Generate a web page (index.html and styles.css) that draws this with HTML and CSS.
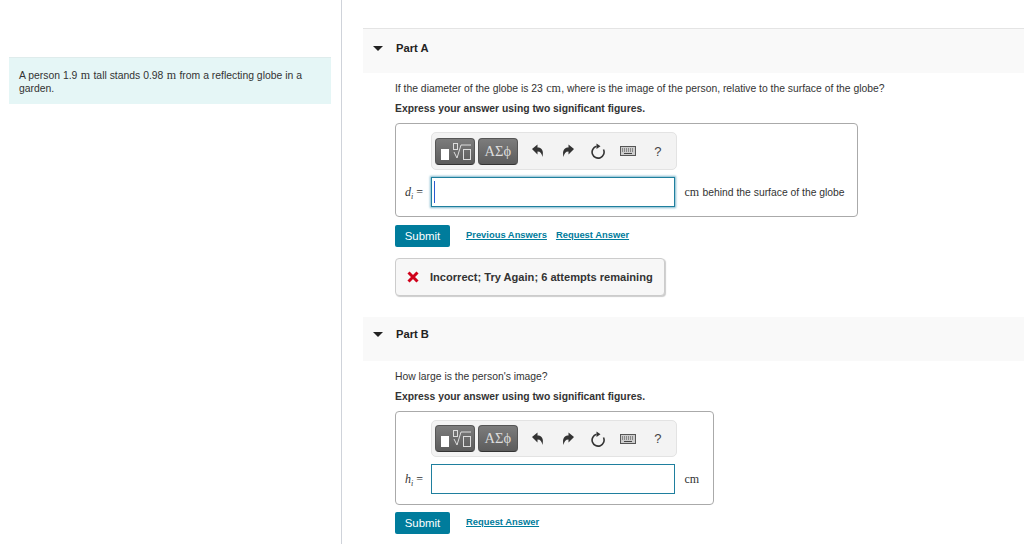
FILE: index.html
```html
<!DOCTYPE html>
<html lang="en">
<head>
<meta charset="UTF-8">
<title>Part A</title>
<link rel="stylesheet" href="styles.css">
</head>
<body>
<div class="page">
  <aside class="side">
    <div class="intro">A person 1.9 <span class="unit">m</span> tall stands 0.98 <span class="unit">m</span> from a reflecting globe in a garden.</div>
  </aside>
  <main class="main">
    <section class="part part-a">
      <div class="part-head"><span class="caret"></span><span class="part-title">Part A</span></div>
      <div class="part-body">
        <p class="question">If the diameter of the globe is 23 <span class="unit">cm</span>, where is the image of the person, relative to the surface of the globe?</p>
        <p class="hint">Express your answer using two significant figures.</p>
        <div class="answer answer-a">
          <div class="toolbar">
            <button class="tool tool-math">
              <svg width="38" height="25" viewBox="0 0 38 25"><rect x="5" y="10" width="8" height="11" fill="#fff"/><rect x="17.500" y="4.500" width="4" height="6" fill="none" stroke="#ddd"/><path d="M18 13l3 6 4-13h10" fill="none" stroke="#ddd"/><rect x="27.500" y="10.500" width="7" height="10" fill="none" stroke="#ddd"/></svg>
            </button>
            <button class="tool tool-greek">ΑΣϕ</button>
            <span class="tool-icon"><svg width="14" height="14" viewBox="0 0 14 14"><path d="M1 5L6.500 .5v3c4 0 6.500 2.500 5 9.500C10.800 9.500 9.500 7.500 6.500 7.500v3z" fill="#333"/></svg></span>
            <span class="tool-icon"><svg width="14" height="14" viewBox="0 0 14 14"><path d="M13 5L7.500 .5v3c-4 0-6.500 2.500-5 9.500C3.200 9.500 4.500 7.500 7.500 7.500v3z" fill="#333"/></svg></span>
            <span class="tool-icon"><svg width="16" height="16" viewBox="0 0 16 16"><path d="M6.500 3.300A6 6 0 1 0 13.500 6.500" fill="none" stroke="#333" stroke-width="1.600"/><path d="M6.500 .5l4 2.800-4 2.700z" fill="#333"/></svg></span>
            <span class="tool-icon"><svg width="16" height="10" viewBox="0 0 16 10"><rect x=".5" y=".5" width="15" height="9" fill="#ccc" stroke="#555"/><path d="M2 3h12M2 5h12" stroke="#444" stroke-dasharray="1 1"/><path d="M4 7.500h8" stroke="#444"/></svg></span>
            <span class="tool-icon tool-help">?</span>
          </div>
          <div class="answer-row">
            <span class="var"><i>d</i><sub><i>i</i></sub> =</span>
            <div class="field field-on"><span class="cursor"></span></div>
            <span class="after"><span class="unit">cm</span> behind the surface of the globe</span>
          </div>
        </div>
        <div class="actions">
          <button class="submit">Submit</button>
          <a class="link" href="#">Previous Answers</a>
          <a class="link" href="#">Request Answer</a>
        </div>
        <div class="feedback">
          <svg width="12" height="12" viewBox="0 0 12 12"><path d="M1.500 1.500l9 9M10.500 1.500l-9 9" stroke="#d0021b" stroke-width="3"/></svg>
          <span>Incorrect; Try Again; 6 attempts remaining</span>
        </div>
      </div>
    </section>
    <section class="part part-b">
      <div class="part-head"><span class="caret"></span><span class="part-title">Part B</span></div>
      <div class="part-body">
        <p class="question">How large is the person's image?</p>
        <p class="hint">Express your answer using two significant figures.</p>
        <div class="answer answer-b">
          <div class="toolbar">
            <button class="tool tool-math">
              <svg width="38" height="25" viewBox="0 0 38 25"><rect x="5" y="10" width="8" height="11" fill="#fff"/><rect x="17.500" y="4.500" width="4" height="6" fill="none" stroke="#ddd"/><path d="M18 13l3 6 4-13h10" fill="none" stroke="#ddd"/><rect x="27.500" y="10.500" width="7" height="10" fill="none" stroke="#ddd"/></svg>
            </button>
            <button class="tool tool-greek">ΑΣϕ</button>
            <span class="tool-icon"><svg width="14" height="14" viewBox="0 0 14 14"><path d="M1 5L6.500 .5v3c4 0 6.500 2.500 5 9.500C10.800 9.500 9.500 7.500 6.500 7.500v3z" fill="#333"/></svg></span>
            <span class="tool-icon"><svg width="14" height="14" viewBox="0 0 14 14"><path d="M13 5L7.500 .5v3c-4 0-6.500 2.500-5 9.500C3.200 9.500 4.500 7.500 7.500 7.500v3z" fill="#333"/></svg></span>
            <span class="tool-icon"><svg width="16" height="16" viewBox="0 0 16 16"><path d="M6.500 3.300A6 6 0 1 0 13.500 6.500" fill="none" stroke="#333" stroke-width="1.600"/><path d="M6.500 .5l4 2.800-4 2.700z" fill="#333"/></svg></span>
            <span class="tool-icon"><svg width="16" height="10" viewBox="0 0 16 10"><rect x=".5" y=".5" width="15" height="9" fill="#ccc" stroke="#555"/><path d="M2 3h12M2 5h12" stroke="#444" stroke-dasharray="1 1"/><path d="M4 7.500h8" stroke="#444"/></svg></span>
            <span class="tool-icon tool-help">?</span>
          </div>
          <div class="answer-row">
            <span class="var"><i>h</i><sub><i>i</i></sub> =</span>
            <div class="field"></div>
            <span class="after after-b"><span class="unit">cm</span></span>
          </div>
        </div>
        <div class="actions">
          <button class="submit">Submit</button>
          <a class="link" href="#">Request Answer</a>
        </div>
      </div>
    </section>
  </main>
</div>
</body>
</html>
```

FILE: styles.css
```css
html, body {
  margin: 0;
  padding: 0;
  height: 544px;
  overflow: hidden;
  background: #fff;
}
body {
  font-family: "Liberation Sans", Arial, sans-serif;
  font-size: 11px;
  color: #333;
}
p {
  margin: 0;
}
.page {
  display: flex;
  height: 544px;
}
.side {
  width: 342px;
  box-sizing: border-box;
  border-right: 1px solid #cfd3da;
  padding: 57px 10px 0 9px;
  flex-shrink: 0;
}
.intro {
  background: #e5f6f6;
  border-top: 1px solid #dfecec;
  padding: 11px 10px 9px 10px;
  height: 47px;
  box-sizing: border-box;
  line-height: 13px;
  font-size: 10.4px;
}
.unit {
  font-family: "Liberation Serif", serif;
  font-size: 12px;
  margin: 0 0.5px;
}
.main {
  flex: 1;
  padding: 28px 0 0 21px;
}
.part-head {
  background: #f9f9f9;
  display: flex;
  align-items: center;
  padding-left: 10px;
  box-sizing: border-box;
}
.part-a .part-head {
  height: 45px;
  padding-bottom: 6px;
  border-top: 1px solid #e4e4e4;
}
.part-b .part-head {
  height: 44px;
  padding-bottom: 10px;
}
.caret {
  width: 0;
  height: 0;
  border-left: 5px solid transparent;
  border-right: 5px solid transparent;
  border-top: 5px solid #222;
  margin-right: 13px;
}
.part-title {
  font-weight: bold;
  font-size: 11.2px;
  color: #222;
}
.part-body {
  padding: 0 0 0 32px;
}
.question {
  padding-top: 9px;
  line-height: 13px;
  font-size: 10.35px;
  color: #333;
}
.hint {
  padding-top: 7px;
  line-height: 13px;
  font-size: 10.35px;
  font-weight: bold;
  color: #333;
}
.answer {
  margin-top: 8px;
  border: 1px solid #aaa;
  border-radius: 4px;
  box-sizing: border-box;
  padding: 8px 0 0 35px;
}
.answer-a {
  width: 463px;
  height: 94px;
}
.answer-b {
  width: 319px;
  height: 94px;
}
.toolbar {
  display: flex;
  align-items: center;
  width: 246px;
  height: 38px;
  box-sizing: border-box;
  background: #f3f3f3;
  border: 1px solid #e3e3e3;
  border-radius: 5px;
  padding: 0 3px;
}
.answer-b .toolbar {
  height: 37px;
}
.tool {
  width: 40px;
  height: 27px;
  border: 1px solid #555;
  border-bottom-color: #333;
  border-radius: 4px;
  background: linear-gradient(#7c7c7c, #5c5c5c);
  color: #ddd;
  padding: 0;
  margin-right: 3px;
  display: flex;
  align-items: center;
  justify-content: center;
}
.tool-greek {
  font-family: "Liberation Serif", serif;
  font-size: 14.5px;
}
.tool-icon {
  width: 30.5px;
  display: flex;
  justify-content: center;
  align-items: center;
}
.tool-greek + .tool-icon {
  margin-left: 2px;
}
.tool-help {
  font-size: 13px;
  color: #444;
}
.answer-row {
  display: flex;
  align-items: center;
  margin-top: 7px;
  margin-left: -26px;
}
.var {
  width: 26px;
  font-family: "Liberation Serif", serif;
  font-size: 12px;
  color: #333;
  white-space: nowrap;
}
.var sub {
  font-size: 8px;
  line-height: 0;
}
.field {
  width: 244px;
  height: 30px;
  box-sizing: border-box;
  border: 1px solid #1f7f9e;
  background: #fff;
  padding: 3px 0 3px 2px;
}
.field-on {
  box-shadow: 0 0 2px 1px #7fb8cc;
}
.cursor {
  display: block;
  width: 1px;
  height: 100%;
  background: #2a5bd0;
}
.after {
  margin-left: 9px;
  font-size: 10.35px;
  color: #333;
}
.actions {
  display: flex;
  align-items: center;
  margin-top: 8px;
  height: 22px;
}
.part-b .actions {
  margin-top: 7px;
}
.submit {
  width: 55px;
  height: 22px;
  border: 0;
  border-radius: 2px;
  background: #007c9c;
  color: #fff;
  font-family: "Liberation Sans", Arial, sans-serif;
  font-size: 11.4px;
  margin-right: 16px;
  padding: 0;
}
.link {
  color: #007c9c;
  font-size: 9.4px;
  font-weight: bold;
  margin-right: 9px;
  padding-bottom: 3px;
}
.feedback {
  display: flex;
  align-items: center;
  gap: 11px;
  width: 270px;
  height: 38px;
  box-sizing: border-box;
  margin-top: 11px;
  padding-left: 11px;
  background: #f7f7f7;
  border: 1px solid #ccc;
  border-radius: 4px;
  box-shadow: 1px 1px 1px #ccc;
  font-size: 11.1px;
  font-weight: bold;
  color: #333;
}
.part-b {
  margin-top: 21px;
}
```
